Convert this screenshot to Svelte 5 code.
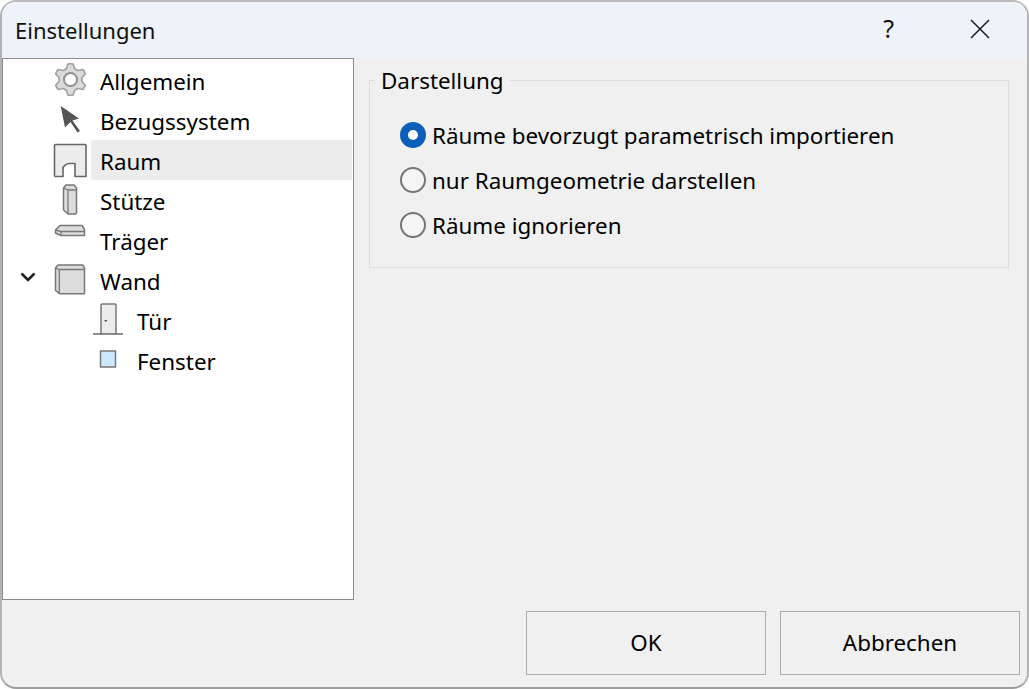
<script>
  const items = [
    { label: 'Allgemein', icon: 'gear' },
    { label: 'Bezugssystem', icon: 'cursor' },
    { label: 'Raum', icon: 'room', selected: true },
    { label: 'Stütze', icon: 'column' },
    { label: 'Träger', icon: 'beam' },
    { label: 'Wand', icon: 'wall', expanded: true },
    { label: 'Tür', icon: 'door', child: true },
    { label: 'Fenster', icon: 'window', child: true }
  ];
  const options = [
    { label: 'Räume bevorzugt parametrisch importieren', checked: true },
    { label: 'nur Raumgeometrie darstellen' },
    { label: 'Räume ignorieren' }
  ];

  function gearPath(cx, cy, outer, inner, teeth) {
    const pts = [];
    const step = (Math.PI * 2) / teeth;
    for (let i = 0; i < teeth; i++) {
      const a = -Math.PI / 2 + i * step;
      for (const [r, d] of [[inner, -0.5], [outer, -0.2], [outer, 0.2], [inner, 0.5]]) {
        const t = a + d * step * 0.72;
        pts.push((cx + r * Math.cos(t)).toFixed(2) + ' ' + (cy + r * Math.sin(t)).toFixed(2));
      }
    }
    return 'M' + pts.join('L') + 'z';
  }
  const gear = gearPath(17.5, 17.5, 16, 11.5, 6);
</script>

{#snippet icon(name)}
  <svg class="icon" width="34" height="36" viewBox="0 0 34 36" fill="none">
    {#if name === 'gear'}
      <path d={gear} fill="#dadada" stroke="#a0a0a0" stroke-width="1.600" stroke-linejoin="round"/>
      <circle cx="17.500" cy="17.500" r="6.500" fill="#fff" stroke="#8f8f8f" stroke-width="2"/>
    {:else if name === 'cursor'}
      <path d="M7.700 4L26 16.500l-6.500 2L27 29l-2.500 1.500L17.500 20 12 25.500z" fill="#555"/>
    {:else if name === 'room'}
      <path d="M1.500 3.500a1 1 0 0 1 1-1H32a1 1 0 0 1 1 1v31H22V21.500h-5c-4 0-7 2.500-7 5.500v7.500H2.500a1 1 0 0 1-1-1z" fill="#ececec" stroke="#666" stroke-width="1.600" stroke-linejoin="round"/>
    {:else if name === 'column'}
      <path d="M10.500 6L13 3h8l2.500 3v25a1 1 0 0 1-1 1H15l-4.500-4z" fill="#dcdcdc" stroke="#777" stroke-width="1.500" stroke-linejoin="round"/>
      <path d="M10.500 6L15 8h8.500M15 8v24" stroke="#777" stroke-width="1.300"/>
    {:else if name === 'beam'}
      <path d="M2.500 8L7 3.500h22l2.500 4v6H8L2.500 11z" fill="#dcdcdc" stroke="#777" stroke-width="1.500" stroke-linejoin="round"/>
      <path d="M2.500 8L8 9.500h23.500M8 9.500v4" stroke="#777" stroke-width="1.300"/>
    {:else if name === 'wall'}
      <path d="M2.500 6L5 3h25l1.500 3v25.800H7l-4.500-3.300z" fill="#dcdcdc" stroke="#777" stroke-width="1.500" stroke-linejoin="round"/>
      <path d="M2.500 6l3.800 1.500h25.200M6.300 7.500V32" stroke="#777" stroke-width="1.300"/>
    {:else if name === 'door'}
      <path d="M10 32V3a1 1 0 0 1 1-1h13a1 1 0 0 1 1 1v29" fill="#ececec" stroke="#777" stroke-width="1.500"/>
      <path d="M2 32h30" stroke="#666" stroke-width="1.500"/>
      <path d="M13.500 18.700h2.500" stroke="#555" stroke-width="1.500"/>
    {:else if name === 'window'}
      <rect x="9.500" y="9" width="15" height="16" fill="#cce8ff" stroke="#777" stroke-width="1.500"/>
    {/if}
  </svg>
{/snippet}

<div class="dialog">
  <header class="titlebar">
    <span class="title">Einstellungen</span>
    <span class="help">?</span>
    <svg class="close" width="20" height="20" viewBox="0 0 20 20"><path d="M1 1l18 18M19 1L1 19" stroke="#1a1a1a" stroke-width="1.500"/></svg>
  </header>

  <div class="body">
    <div class="main">
      <nav class="tree">
        {#each items as it}
          <div class="row" class:child={it.child}>
            <span class="chev">
              {#if it.expanded}
                <svg width="16" height="10" viewBox="0 0 16 10"><path d="M1.500 1.500L8 8l6.500-6.500" fill="none" stroke="#222" stroke-width="2.600"/></svg>
              {/if}
            </span>
            {@render icon(it.icon)}
            <span class="label" class:selected={it.selected} class:sub={it.child}>{it.label}</span>
          </div>
        {/each}
      </nav>

      <fieldset class="group">
        <legend>Darstellung</legend>
        {#each options as o}
          <div class="radio">
            <span class="dot" class:checked={o.checked}></span>
            <span class="opt">{o.label}</span>
          </div>
        {/each}
      </fieldset>
    </div>

    <footer class="footer">
      <button class="btn">OK</button>
      <button class="btn">Abbrechen</button>
    </footer>
  </div>
</div>

<style>
  :global(body) { margin: 0; background: #fff; }
  .dialog {
    width: 1029px; height: 689px; box-sizing: border-box;
    display: flex; flex-direction: column; overflow: hidden;
    border: 2px solid #b3b3b3; border-bottom-color: #9e9e9e; border-top-color: #bcbcbc;
    border-radius: 16px;
    background: #f0f0f0;
    font-family: "Noto Sans", "Open Sans", sans-serif;
    font-size: 22.4px; color: #000;
  }
  .titlebar {
    height: 56px; flex: none; display: flex; align-items: center;
    background: #eef2f9; padding: 0 37px 0 13px;
  }
  .title { flex: 1; color: #111; font-size: 22px; }
  .help { margin-right: 76px; margin-top: -4px; font-size: 25px; color: #111; }
  .close { margin-top: -2px; }
  .body { flex: 1; display: flex; flex-direction: column; min-height: 0; }
  .main { display: flex; align-items: flex-start; height: 553px; }
  .tree {
    width: 352px; height: 542px; box-sizing: border-box; flex: none;
    background: #fff; border: 1px solid #8c8c8c; padding-top: 1px;
  }
  .row { height: 40px; display: flex; align-items: center; padding-left: 12px; }
  .row.child { padding-left: 50px; }
  .chev { width: 38px; flex: none; display: flex; justify-content: flex-start; padding-left: 5px; box-sizing: border-box; margin-top: -6px; }
  .icon { flex: none; }
  .label {
    flex: 1; height: 40px; line-height: 44px; margin-left: 4px; padding-left: 9px; box-sizing: border-box;
    margin-right: 1px;
  }
  .label.sub { padding-left: 8px; }
  .label.selected { background: #ececec; border-radius: 2px; }
  .group {
    margin: 7px 0 0 15px; padding: 17px 0 0 30px; width: 640px; height: 203px; box-sizing: border-box;
    border: 1px solid #dcdcdc; min-width: 0;
    display: block;
  }
  .group legend { padding: 0 6px; margin-left: -25px; line-height: 32px; height: 30px; }
  .radio { display: flex; align-items: center; height: 45px; gap: 6px; }
  .opt { padding-top: 2px; }
  .dot {
    width: 26px; height: 26px; box-sizing: border-box; border-radius: 50%;
    border: 2px solid #757575; background: #f5f5f5; flex: none;
  }
  .dot.checked { background: #fff; border: 8px solid #0a60b8; }
  .footer { flex: 1; display: flex; justify-content: flex-end; gap: 14px; padding: 0 7px 0 0; align-items: flex-start; }
  .btn {
    width: 240px; height: 64px; background: #f0f0f0; border: 1px solid #ababab; border-radius: 0;
    font: inherit; color: #000; padding: 0 0 2px;
  }
</style>
